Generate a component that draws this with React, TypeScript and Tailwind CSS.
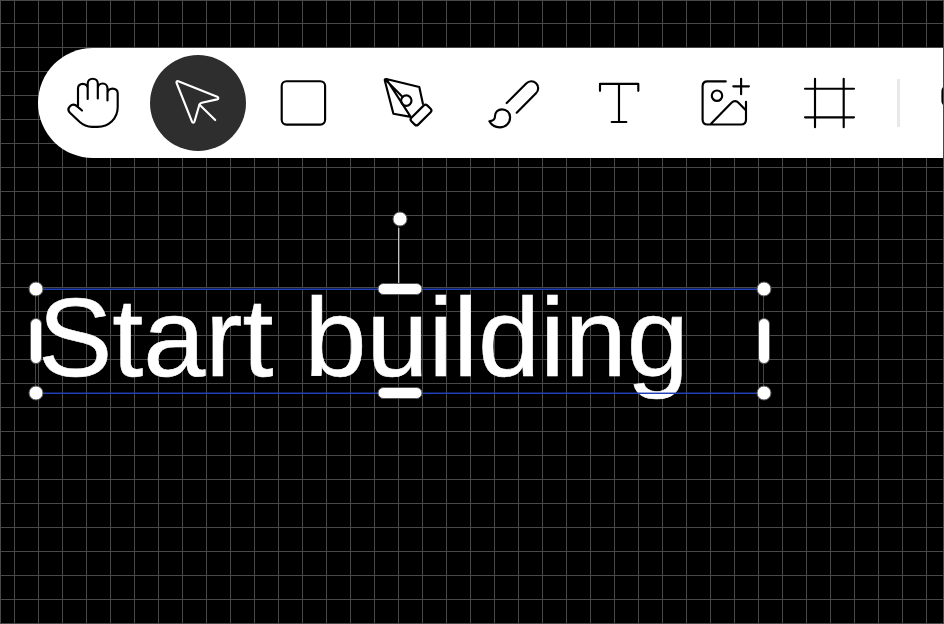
import type { ReactNode } from "react";

type ToolProps = { label: string; active?: boolean; children: ReactNode };

function Tool({ label, active = false, children }: ToolProps) {
  return (
    <button
      aria-label={label}
      className={
        active
          ? "flex size-24 shrink-0 items-center justify-center rounded-full bg-[#2e2e2e] text-white"
          : "flex size-24 shrink-0 items-center justify-center rounded-full text-black"
      }
    >
      <svg
        className="size-15"
        viewBox="-30 -30 60 60"
        fill="none"
        stroke="currentColor"
        strokeWidth="2.15"
        strokeLinecap="round"
        strokeLinejoin="round"
      >
        {children}
      </svg>
    </button>
  );
}

function Toolbar() {
  return (
    <div className="ml-[37px] flex h-[110px] w-[1200px] shrink-0 items-center gap-[9px] rounded-l-full bg-white pl-[7px]">
      <Tool label="Hand">
        <path d="M-11 7.5L-15.5 3.6C-18 1.2-21 1.2-23 3.2C-25 5.3-24.8 8-22.8 10L-13.5 18.8C-9.3 22.6-6 23.8-1 23.8H4.5C16 23.8 24.7 15.5 24.7 4V-9.7C24.7-12.5 22.6-14.4 19.6-14.4C16.6-14.4 14.5-12.5 14.5-9.7V-2.5M14.5-3V-14.5C14.5-17.5 12.5-19.5 9.7-19.5C6.8-19.5 4.8-17.5 4.8-14.5M4.8-4.5V-19.4C4.8-22.3 2.7-24.3-.3-24.3C-3.2-24.3-5.3-22.3-5.3-19.4V-4M-5.3-14.5C-5.3-17.3-7.3-19.2-10.2-19.2C-13-19.2-15-17.3-15-14.5V4" />
      </Tool>
      <Tool label="Select" active>
        <path d="M-19.7-21.7L19.2-6.2C20.8-5.5 20.7-4 19.1-3.6L3.8-.3C2.5 0 1.7.7 1.3 2L-3.5 18.5C-4 20-5.5 20-6 18.6L-21.4-20C-21.9-21.4-21.1-22.2-19.7-21.7ZM1.3 1.5L17.2 17" />
      </Tool>
      <Tool label="Rectangle">
        <rect x="-21.3" y="-21.8" width="43.4" height="43.4" rx="4.8" />
      </Tool>
      <Tool label="Pen">
        <path d="M-21.7-24L11.3-16L14.9.8M2.7 13.9L-14.6 10.7L-23.2-22.4C-23.5-23.6-22.8-24.2-21.7-24ZM-22.5-23.3L-5.6-6.3" />
        <circle cx="-1.7" cy="-2.4" r="5.2" />
        <rect x="-11.2" y="-4.8" width="22.4" height="9.6" rx="2.4" transform="translate(13 12) rotate(-45)" />
      </Tool>
      <Tool label="Brush">
        <path d="M-6.3 0L13.2-19.5C16.1-22.5 20.3-22.5 23.1-19.7C25.9-16.9 25.9-12.6 23-9.7L3.7 9.7M-18.1 14C-18.2 9.2-15 6.3-10.9 6.3C-6.5 6.3-2.9 9.8-2.9 14.2C-2.9 20.1-7.3 24.3-13.2 24.3C-18 24.3-21.6 22-23.6 18.3C-20.2 17.8-18.2 16.8-18.1 14Z" />
      </Tool>
      <Tool label="Text">
        <path d="M-18-12.2V-19.1H20.3V-12.2M1-19.1V19M-6.3 19H8.3" />
      </Tool>
      <Tool label="Image">
        <path d="M2.7-21.6H-15.5C-18.8-21.6-20.4-20-20.4-16.7V16.5C-20.4 19.9-18.8 21.5-15.5 21.5H18C21.4 21.5 23 19.9 23 16.5V-1.3M18.1-24.3V-8.8M10.3-16.7H25.9M-12 20.7L8.5-.2C10.7-2.4 13.5-2.4 15.5-.2L22.8 7.2" />
        <circle cx="-6" cy="-7.3" r="5.2" />
      </Tool>
      <Tool label="Frame">
        <path d="M-13-24.2V24.2M15.7-24.2V24.2M-23-14.3H26M-23 14.3H26" />
      </Tool>
      <div className="ml-[11.5px] h-12 w-[3px] shrink-0 bg-[#e8e8e8]" />
      <svg className="ml-[31.5px] size-12 shrink-0" viewBox="0 0 48 48" fill="none" stroke="black" strokeWidth="2.2">
        <rect x="2.5" y="7" width="34" height="20" rx="5" />
      </svg>
    </div>
  );
}

const knob =
  "absolute size-[15px] -translate-x-1/2 -translate-y-1/2 rounded-full border border-[#555] bg-white";
const wideGrip =
  "absolute h-3 w-[45px] -translate-x-1/2 -translate-y-1/2 rounded-full border border-[#555] bg-white";
const tallGrip =
  "absolute h-[46px] w-3 -translate-x-1/2 -translate-y-1/2 rounded-full border border-[#555] bg-white";

function SelectedText() {
  return (
    <div className="relative mt-[131px] ml-[34px] h-[105px] w-[729px] shrink-0">
      <span className="block pl-[3px] font-['Liberation_Sans',Arial,sans-serif] text-[111.5px] leading-[97px] whitespace-nowrap text-white [-webkit-text-stroke:0.6px_white]">
        Start building
      </span>
      <div className="absolute inset-x-0 top-0 h-px bg-[#2040b8] shadow-[0_-1px_0_#10205a]" />
      <div className="absolute inset-x-0 bottom-0 h-px bg-[#2040b8] shadow-[0_-1px_0_rgba(32,64,184,0.45)]" />
      <div className="absolute inset-y-0 left-0 w-px bg-[#2040b8]" />
      <div className="absolute inset-y-0 right-0 w-px bg-[#2040b8]" />
      <div className="absolute -top-[61px] left-[363px] h-[55px] w-px bg-[#c4c4c4]" />
      <div className="absolute -top-[61px] left-[364px] h-[55px] w-px bg-[#2040b8]" />
      <span className={`${knob} -top-[70px] left-[364.5px]`} />
      <span className={`${knob} top-0 left-[0.5px]`} />
      <span className={`${knob} top-0 left-[728.5px]`} />
      <span className={`${knob} top-[104px] left-[0.5px]`} />
      <span className={`${knob} top-[104px] left-[728.5px]`} />
      <span className={`${wideGrip} top-0 left-[364.5px]`} />
      <span className={`${wideGrip} top-[104px] left-[364.5px]`} />
      <span className={`${tallGrip} top-[52px] left-[0.5px]`} />
      <span className={`${tallGrip} top-[52px] left-[728.5px]`} />
    </div>
  );
}

export default function App() {
  return (
    <main className="flex h-[624px] w-[944px] flex-col overflow-hidden border border-[#484848] bg-black bg-[linear-gradient(to_right,#484848_1px,transparent_1px),linear-gradient(to_bottom,#484848_1px,transparent_1px)] bg-[size:24px_24px] bg-[position:13px_22px] pt-[47px]">
      <Toolbar />
      <SelectedText />
    </main>
  );
}
